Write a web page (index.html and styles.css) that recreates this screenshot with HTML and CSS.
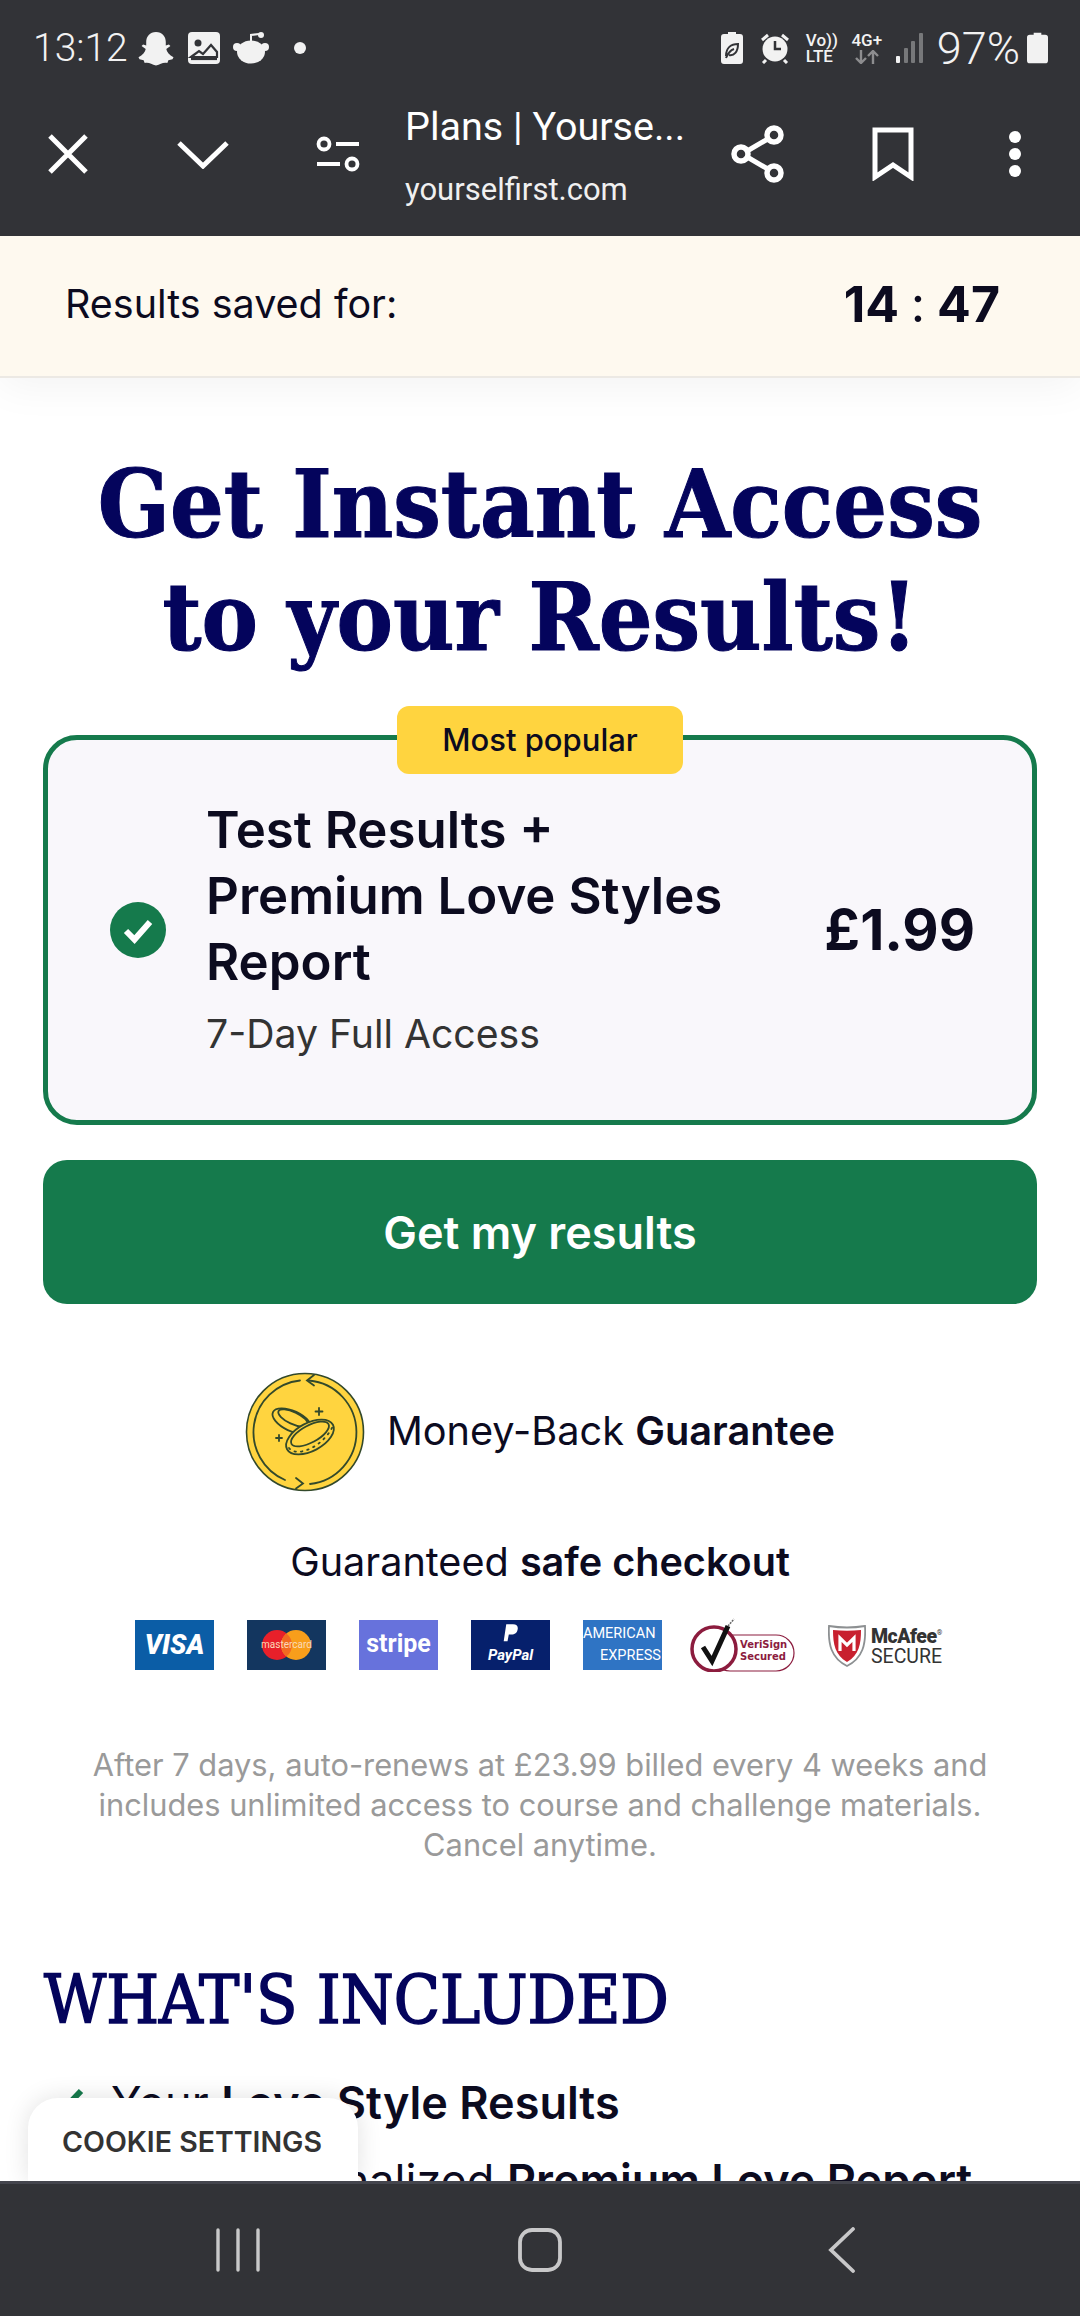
FILE: index.html
```html
<!DOCTYPE html>
<html lang="en">
<head>
    <meta charset="UTF-8" />
    <meta name="viewport" content="width=device-width, initial-scale=1" />
    <title>Plans | Yourself First</title>
    <link rel="stylesheet" href="styles.css">
</head>
<body>
    <div class="phone">
        <header class="chrome">
            <div class="status-bar">
                <div class="status-left">
                    <span class="clock">13:12</span>
                    <svg class="ico-ghost" viewBox="0 0 36 34"><path d="M18 1c6 0 9.500 4.500 9.500 9.500v3.500l3-1 1.500 1.500-4 3c.5 3 3 6 7 8l-1 2-4 1-1 2.500c-4-1-6.500 1-11 2.500-4.500-1.500-7-3.500-11-2.500l-1-2.500-4-1-1-2c4-2 6.500-5 7-8l-4-3L5.500 13l3 1v-3.500C8.500 5.500 12 1 18 1z" fill="#f2f2f2"/></svg>
                    <svg class="ico-image" viewBox="0 0 32 32"><rect width="32" height="32" rx="4" fill="#f2f2f2"/><circle cx="10" cy="11" r="3.500" fill="#323337"/><path d="M3 25l8-6 4 3 8-9 6 7v5H3z" fill="none" stroke="#323337" stroke-width="2.200"/><path d="M3 27h26" stroke="#323337" stroke-width="2.200"/></svg>
                    <svg class="ico-reddit" viewBox="0 0 36 32"><path d="M18 11V3l8-1" fill="none" stroke="#f2f2f2" stroke-width="2"/><circle cx="28" cy="3" r="3" fill="#f2f2f2"/><ellipse cx="18" cy="20" rx="14" ry="11.500" fill="#f2f2f2"/><circle cx="4" cy="15" r="4" fill="#f2f2f2"/><circle cx="32" cy="15" r="4" fill="#f2f2f2"/></svg>
                    <span class="dot"></span>
                </div>
                <div class="status-right">
                    <svg class="ico-leaf" viewBox="0 0 22 32"><path d="M7 0h8v2h4a3 3 0 0 1 3 3v24a3 3 0 0 1-3 3H3a3 3 0 0 1-3-3V5a3 3 0 0 1 3-3h4z" fill="#f2f2f2"/><path d="M5 24c0-8 5-12 12-12 0 8-4 12-9 11m-3 3c2-5 5-8 8-9" fill="none" stroke="#323337" stroke-width="2"/></svg>
                    <svg class="ico-alarm" viewBox="0 0 30 32"><circle cx="15" cy="17" r="12.500" fill="#f2f2f2"/><path d="M15 9v8h6" fill="none" stroke="#323337" stroke-width="2.500"/><path d="M2 8l6-5M28 8l-6-5M6 28l-3 3M24 28l3 3" stroke="#f2f2f2" stroke-width="3"/></svg>
                    <div class="volte"><span>Vo))</span><span>LTE</span></div>
                    <div class="net"><span>4G+</span><svg viewBox="0 0 26 14"><path d="M7 0v12M2 8l5 5 5-5M19 14V2M14 6l5-5 5 5" fill="none" stroke="#8d8d8f" stroke-width="2.400"/></svg></div>
                    <svg class="ico-signal" viewBox="0 0 27 30"><rect x="0" y="23" width="4" height="7" rx="1" fill="#f2f2f2"/><rect x="8" y="15" width="4" height="15" rx="1" fill="#77787a"/><rect x="15" y="8" width="4" height="22" rx="1" fill="#77787a"/><rect x="23" y="0" width="4" height="30" rx="1" fill="#77787a"/></svg>
                    <span class="percent">97%</span>
                    <svg class="ico-battery" viewBox="0 0 22 32"><path d="M7 0h8v2h4a3 3 0 0 1 3 3v24a3 3 0 0 1-3 3H3a3 3 0 0 1-3-3V5a3 3 0 0 1 3-3h4z" fill="#f2f2f2"/></svg>
                </div>
            </div>
            <div class="toolbar">
                <div class="tb-btn">
                    <svg width="44" height="44" viewBox="0 0 44 44"><path d="M4 4l36 36M40 4L4 40" stroke="#fff" stroke-width="5"/></svg>
                </div>
                <div class="tb-btn">
                    <svg width="54" height="30" viewBox="0 0 54 30"><path d="M3 4l24 23L51 4" fill="none" stroke="#fff" stroke-width="5"/></svg>
                </div>
                <div class="tb-btn">
                    <svg width="44" height="38" viewBox="0 0 44 38"><circle cx="8" cy="9" r="5.500" fill="none" stroke="#fff" stroke-width="3.800"/><path d="M20 9h23M1 29h23" stroke="#fff" stroke-width="4"/><circle cx="36" cy="29" r="5.500" fill="none" stroke="#fff" stroke-width="3.800"/></svg>
                </div>
                <div class="tb-title">
                    <div class="page-name">Plans | Yourse...</div>
                    <div class="page-url">yourselfirst.com</div>
                </div>
                <div class="tb-btn">
                    <svg width="54" height="60" viewBox="0 0 54 60"><path d="M42 12L11 30l31 18" fill="none" stroke="#fff" stroke-width="5"/><circle cx="43" cy="11" r="7" fill="#323337" stroke="#fff" stroke-width="5.500"/><circle cx="10" cy="30" r="7" fill="#323337" stroke="#fff" stroke-width="5.500"/><circle cx="43" cy="49" r="7" fill="#323337" stroke="#fff" stroke-width="5.500"/></svg>
                </div>
                <div class="tb-btn">
                    <svg width="42" height="54" viewBox="0 0 42 54"><path d="M3 3h36v47L21 38 3 50z" fill="none" stroke="#fff" stroke-width="5"/></svg>
                </div>
                <div class="tb-btn tb-last">
                    <svg width="14" height="48" viewBox="0 0 14 48"><circle cx="7" cy="7" r="6" fill="#fff"/><circle cx="7" cy="24" r="6" fill="#fff"/><circle cx="7" cy="41" r="6" fill="#fff"/></svg>
                </div>
            </div>
        </header>

        <main class="page">
            <div class="timer-bar">
                <span class="timer-label">Results saved for:</span>
                <span class="timer-value">14 <i>:</i> 47</span>
            </div>

            <h1>Get Instant Access<br>to your Results!</h1>

            <section class="plan">
                <div class="plan-badge">Most popular</div>
                <svg class="plan-check" viewBox="0 0 56 56"><circle cx="28" cy="28" r="28" fill="#157a4c"/><path d="M16 29l8.500 8.500L40 20" fill="none" stroke="#fff" stroke-width="6"/></svg>
                <div class="plan-info">
                    <div class="plan-name">Test Results + Premium Love Styles Report</div>
                    <div class="plan-sub">7-Day Full Access</div>
                </div>
                <div class="plan-price">£1.99</div>
            </section>

            <button class="btn-results">Get my results</button>

            <div class="guarantee">
                <svg class="coin" viewBox="0 0 120 120">
                    <circle cx="60" cy="60" r="58.500" fill="#ffd43f" stroke="#33492b" stroke-width="1.600"/>
                    <g fill="none" stroke="#33492b" stroke-width="1.800" stroke-linecap="round">
                        <path d="M55 8.500A52 52 0 0 0 40 108"/>
                        <path d="M65 112A52 52 0 0 0 64 8.500"/>
                        <path d="M69 3l-7 5.500 7 5"/>
                        <path d="M51 106l7 5.500-7 5"/>
                        <ellipse cx="47" cy="49" rx="21" ry="10" transform="rotate(25 47 49)"/>
                        <ellipse cx="48" cy="46" rx="16" ry="6" transform="rotate(25 48 46)"/>
                        <ellipse cx="65" cy="65" rx="26" ry="14" transform="rotate(-28 65 65)" fill="#ffd43f"/>
                        <ellipse cx="65" cy="62" rx="21" ry="8.500" transform="rotate(-28 65 62)"/>
                        <path d="M44 76c8 10 34-1 44-22" stroke-dasharray="1.500 5"/>
                        <path d="M74 36v7M70.500 39.500h7M34 63v6M31 66h6"/>
                    </g>
                </svg>
                <span>Money-Back <b>Guarantee</b></span>
            </div>

            <p class="safe-title">Guaranteed <b>safe checkout</b></p>

            <div class="pay-logos">
                <div class="pay pay-visa">VISA</div>
                <div class="pay pay-master">
                    <svg viewBox="0 0 79 50"><circle cx="30" cy="25" r="15" fill="#e8202a"/><circle cx="49" cy="25" r="15" fill="#f89e1b"/><path d="M39.500 13.400a15 15 0 0 1 0 23.200 15 15 0 0 1 0-23.200z" fill="#f26a21"/></svg>
                    <span>mastercard</span>
                </div>
                <div class="pay pay-stripe">stripe</div>
                <div class="pay pay-paypal">
                    <svg viewBox="0 0 20 24"><path d="M5 0h8c4 0 6 2 5.500 5.500C18 10 15 12 11 12H8l-1.500 8H2z" fill="#fff"/></svg>
                    <span>PayPal</span>
                </div>
                <div class="pay pay-amex"><span>AMERICAN</span><span class="amex-low">EXPRESS</span></div>
                <div class="verisign">
                    <svg viewBox="0 0 105 54"><rect x="22" y="17" width="82" height="36" rx="18" fill="#fff" stroke="#8c1c3e" stroke-width="1.200"/><circle cx="24" cy="31" r="22" fill="#fff" stroke="#8c1c3e" stroke-width="3.500"/><path d="M13 29l9 14L38 8" fill="none" stroke="#111" stroke-width="5"/><path d="M38 8l6-7" stroke="#666" stroke-width="1.500" stroke-dasharray="2 1"/></svg>
                    <div class="verisign-text">VeriSign<br>Secured</div>
                </div>
                <div class="mcafee">
                    <svg viewBox="0 0 38 44"><path d="M1 3c12 2 24 2 36 0 1 18-2 32-18 40C3 35 0 21 1 3z" fill="#fff" stroke="#8d9092" stroke-width="1.800"/><path d="M5 7c9 1 19 1 28 0 0 14-2 25-14 32C7 32 5 21 5 7z" fill="#c8202f"/><path d="M12 28V15l7 7 7-7v13" fill="none" stroke="#fff" stroke-width="3.200"/></svg>
                    <div class="mcafee-text"><b>McAfee<sup>®</sup></b><span>SECURE</span></div>
                </div>
            </div>

            <p class="fine-print">After 7 days, auto-renews at £23.99 billed every 4 weeks and includes unlimited access to course and challenge materials. Cancel anytime.</p>

            <h2>WHAT'S INCLUDED</h2>
            <ul class="included">
                <li><svg viewBox="0 0 38 30"><path d="M3 16l10 10L35 3" fill="none" stroke="#157a4c" stroke-width="6"/></svg><span>Your <b>Love Style Results</b></span></li>
                <li><svg viewBox="0 0 38 30"><path d="M3 16l10 10L35 3" fill="none" stroke="#157a4c" stroke-width="6"/></svg><span>Your personalized <b>Premium Love Report</b></span></li>
            </ul>

            <div class="cookie-tab">COOKIE SETTINGS</div>
        </main>

        <nav class="nav-bar">
            <svg width="46" height="44" viewBox="0 0 46 44"><path d="M3 2v40M23 2v40M43 2v40" stroke="#c8c8c9" stroke-width="3.400" stroke-linecap="round"/></svg>
            <svg width="46" height="46" viewBox="0 0 46 46"><rect x="3" y="3" width="40" height="40" rx="12" fill="none" stroke="#c8c8c9" stroke-width="3.800"/></svg>
            <svg class="nav-back" width="28" height="46" viewBox="0 0 28 46"><path d="M25 2L3 23l22 21" fill="none" stroke="#c8c8c9" stroke-width="3.800" stroke-linecap="round"/></svg>
        </nav>
    </div>
</body>
</html>
```

FILE: styles.css
```css
* {
    box-sizing: border-box;
}
body {
    margin: 0;
    background: #fff;
    font-family: Inter, 'Liberation Sans', sans-serif;
    color: #0c0b1f;
}
.phone {
    width: 1080px;
    height: 2316px;
    display: flex;
    flex-direction: column;
    overflow: hidden;
}

/* browser chrome */
.chrome {
    height: 236px;
    background: #323337;
    color: #fff;
    font-family: Roboto, sans-serif;
    flex-shrink: 0;
}
.status-bar {
    height: 72px;
    padding: 24px 32px 0 33px;
    display: flex;
    justify-content: space-between;
    align-items: center;
}
.status-left,
.status-right {
    display: flex;
    align-items: center;
}
.clock {
    font-size: 39px;
    font-weight: 300;
    color: #f2f2f2;
    width: 104px;
}
.ico-ghost {
    width: 38px;
    height: 35px;
    margin-right: 13px;
}
.ico-image {
    width: 32px;
    height: 32px;
    margin-right: 13px;
}
.ico-reddit {
    width: 36px;
    height: 32px;
    margin-right: 25px;
}
.dot {
    width: 12px;
    height: 12px;
    border-radius: 50%;
    background: #f2f2f2;
}
.ico-leaf {
    width: 22px;
    height: 32px;
    margin-right: 17px;
}
.ico-alarm {
    width: 30px;
    height: 32px;
    margin-right: 16px;
}
.volte {
    width: 33px;
    margin-right: 11px;
    font-size: 17px;
    font-weight: 500;
    line-height: 16px;
    color: #f2f2f2;
    display: flex;
    flex-direction: column;
    white-space: nowrap;
}
.net {
    width: 34px;
    margin-right: 12px;
    font-size: 17px;
    font-weight: 500;
    line-height: 17px;
    color: #f2f2f2;
    text-align: center;
}
.net span,
.net svg {
    display: block;
}
.net svg {
    width: 26px;
    height: 14px;
    margin: 1px auto 0;
}
.ico-signal {
    width: 27px;
    height: 30px;
    margin-right: 14px;
}
.percent {
    font-size: 45px;
    font-weight: 300;
    color: #f2f2f2;
    margin-right: 7px;
}
.ico-battery {
    width: 21px;
    height: 32px;
}
.toolbar {
    height: 164px;
    display: flex;
    align-items: center;
}
.tb-btn {
    width: 135px;
    height: 100%;
    flex-shrink: 0;
    display: flex;
    align-items: center;
    justify-content: center;
}
.tb-last {
    width: 108px;
    padding-left: 2px;
}
.tb-title {
    width: 285px;
    flex-shrink: 0;
    white-space: nowrap;
    padding-top: 4px;
}
.page-name {
    font-size: 39.500px;
    line-height: 48px;
}
.page-url {
    font-size: 31px;
    line-height: 38px;
    margin-top: 20px;
    color: #f0f0f0;
}

/* page */
.page {
    flex: 1;
    position: relative;
    overflow: hidden;
    padding: 0 43px;
}
.timer-bar {
    height: 142px;
    margin: 0 -43px;
    padding: 0 80px 5px 65px;
    background: #fef9ef;
    border-bottom: 2px solid #ece9e4;
    box-shadow: 0 8px 40px rgba(0, 0, 0, 0.05);
    display: flex;
    justify-content: space-between;
    align-items: center;
}
.timer-label {
    font-size: 39.500px;
}
.timer-value {
    font-size: 50px;
    font-weight: 700;
}
.timer-value i {
    font-style: normal;
    font-weight: 400;
}
h1 {
    margin: 70px 0 0;
    font-family: 'DejaVu Serif', serif;
    font-stretch: condensed;
    font-size: 94px;
    line-height: 113px;
    font-weight: 700;
    text-align: center;
    color: #04045c;
    -webkit-text-stroke: 1px #04045c;
}
.plan {
    position: relative;
    margin-top: 61px;
    height: 390px;
    padding: 0 57px 0 62px;
    background: #f9f7fb;
    border: 5px solid #157a4c;
    border-radius: 34px;
    display: flex;
    align-items: center;
}
.plan-badge {
    position: absolute;
    top: -34px;
    left: 349px;
    width: 286px;
    height: 68px;
    background: #ffd43f;
    border-radius: 12px;
    font-size: 31px;
    font-weight: 500;
    line-height: 68px;
    text-align: center;
}
.plan-check {
    width: 56px;
    height: 56px;
    flex-shrink: 0;
    margin-right: 40px;
}
.plan-info {
    flex: 1;
    margin-bottom: 6px;
}
.plan-name {
    width: 530px;
    font-size: 51px;
    font-weight: 600;
    line-height: 66px;
}
.plan-sub {
    margin-top: 16px;
    font-size: 39.200px;
    line-height: 46px;
    color: #333;
}
.plan-price {
    font-size: 56px;
    font-weight: 700;
}
.btn-results {
    display: block;
    width: 100%;
    height: 144px;
    margin-top: 35px;
    background: #157a4c;
    color: #fff;
    border: none;
    border-radius: 24px;
    font-family: Inter, sans-serif;
    font-size: 45px;
    font-weight: 600;
}
.guarantee {
    margin-top: 68px;
    display: flex;
    justify-content: center;
    align-items: center;
    gap: 22px;
    font-size: 39.700px;
}
.coin {
    width: 120px;
    height: 120px;
}
.guarantee span {
    padding-bottom: 3px;
}
.guarantee b,
.safe-title b {
    font-weight: 600;
}
.safe-title {
    margin: 47px 0 0;
    font-size: 39.600px;
    line-height: 46px;
    text-align: center;
}
.pay-logos {
    margin: 35px 0 0 92px;
    display: flex;
    align-items: center;
    height: 50px;
}
.pay {
    position: relative;
    width: 79px;
    height: 50px;
    margin-right: 33px;
    flex-shrink: 0;
    color: #fff;
    text-align: center;
    font-family: Roboto, sans-serif;
    overflow: hidden;
}
.pay-visa {
    background: #0b5da6;
    font-size: 27px;
    font-weight: 900;
    font-style: italic;
    line-height: 50px;
}
.pay-master {
    background: #13365f;
}
.pay-master svg {
    display: block;
}
.pay-master span {
    position: absolute;
    left: 0;
    right: 0;
    top: 18px;
    font-size: 10px;
    line-height: 14px;
    color: #fbd9b8;
}
.pay-stripe {
    background: #6772dc;
    font-size: 25px;
    font-weight: 700;
    line-height: 48px;
}
.pay-paypal {
    background: #06206c;
}
.pay-paypal svg {
    display: block;
    width: 17px;
    height: 21px;
    margin: 4px auto 0;
}
.pay-paypal span {
    display: block;
    font-size: 15px;
    line-height: 20px;
    font-weight: 700;
    font-style: italic;
}
.pay-amex {
    background: #2f74c4;
    margin-right: 28px;
    font-size: 14.500px;
    line-height: 22px;
    padding-top: 3px;
    white-space: nowrap;
    text-align: left;
}
.pay-amex span {
    display: block;
}
.amex-low {
    margin-left: 17px;
}
.verisign {
    position: relative;
    width: 105px;
    height: 54px;
    margin-right: 33px;
    flex-shrink: 0;
}
.verisign svg {
    display: block;
}
.verisign-text {
    position: absolute;
    left: 50px;
    top: 21px;
    font-size: 10px;
    line-height: 12px;
    font-weight: 700;
    color: #8c1c3e;
    font-family: 'DejaVu Sans', sans-serif;
}
.mcafee {
    width: 114px;
    display: flex;
    align-items: center;
    gap: 5px;
    flex-shrink: 0;
}
.mcafee svg {
    width: 38px;
    height: 44px;
    flex-shrink: 0;
}
.mcafee-text {
    font-family: Roboto, sans-serif;
    font-size: 19.500px;
    line-height: 20px;
    color: #333;
}
.mcafee-text b,
.mcafee-text span {
    display: block;
    white-space: nowrap;
}
.mcafee-text b {
    font-weight: 900;
    letter-spacing: -0.5px;
}
.mcafee-text sup {
    font-size: 7px;
    font-weight: 400;
}
.fine-print {
    margin: 75px 0 0;
    padding: 0 40px;
    font-size: 30.800px;
    line-height: 40px;
    text-align: center;
    color: #9a9a9a;
}
h2 {
    margin: 96px 0 0 1px;
    font-family: 'DejaVu Serif', serif;
    font-stretch: condensed;
    font-size: 67.300px;
    line-height: 78px;
    font-weight: 400;
    color: #04045c;
    -webkit-text-stroke: 1.600px #04045c;
    white-space: nowrap;
}
.included {
    margin: 25px 0 0;
    padding: 0;
    list-style: none;
    font-size: 45px;
    line-height: 78px;
}
.included li {
    display: flex;
    align-items: center;
    gap: 27px;
    white-space: nowrap;
}
.included li b {
    font-weight: 600;
}
.included svg {
    width: 38px;
    height: 30px;
    margin-left: 3px;
}
.cookie-tab {
    position: absolute;
    left: 28px;
    bottom: 0;
    width: 330px;
    height: 83px;
    padding: 26px 0 0 34px;
    background: #fff;
    border-radius: 30px 30px 0 0;
    box-shadow: 0 0 24px rgba(0, 0, 0, 0.12);
    font-size: 28.500px;
    line-height: 36px;
    font-weight: 600;
    color: #333;
    white-space: nowrap;
}
.nav-bar {
    height: 135px;
    flex-shrink: 0;
    background: #323337;
    border-top: 3px solid #44454d;
    display: flex;
    align-items: center;
    gap: 256px;
    padding-left: 215px;
}
.nav-back {
    margin-left: 9px;
}
```
